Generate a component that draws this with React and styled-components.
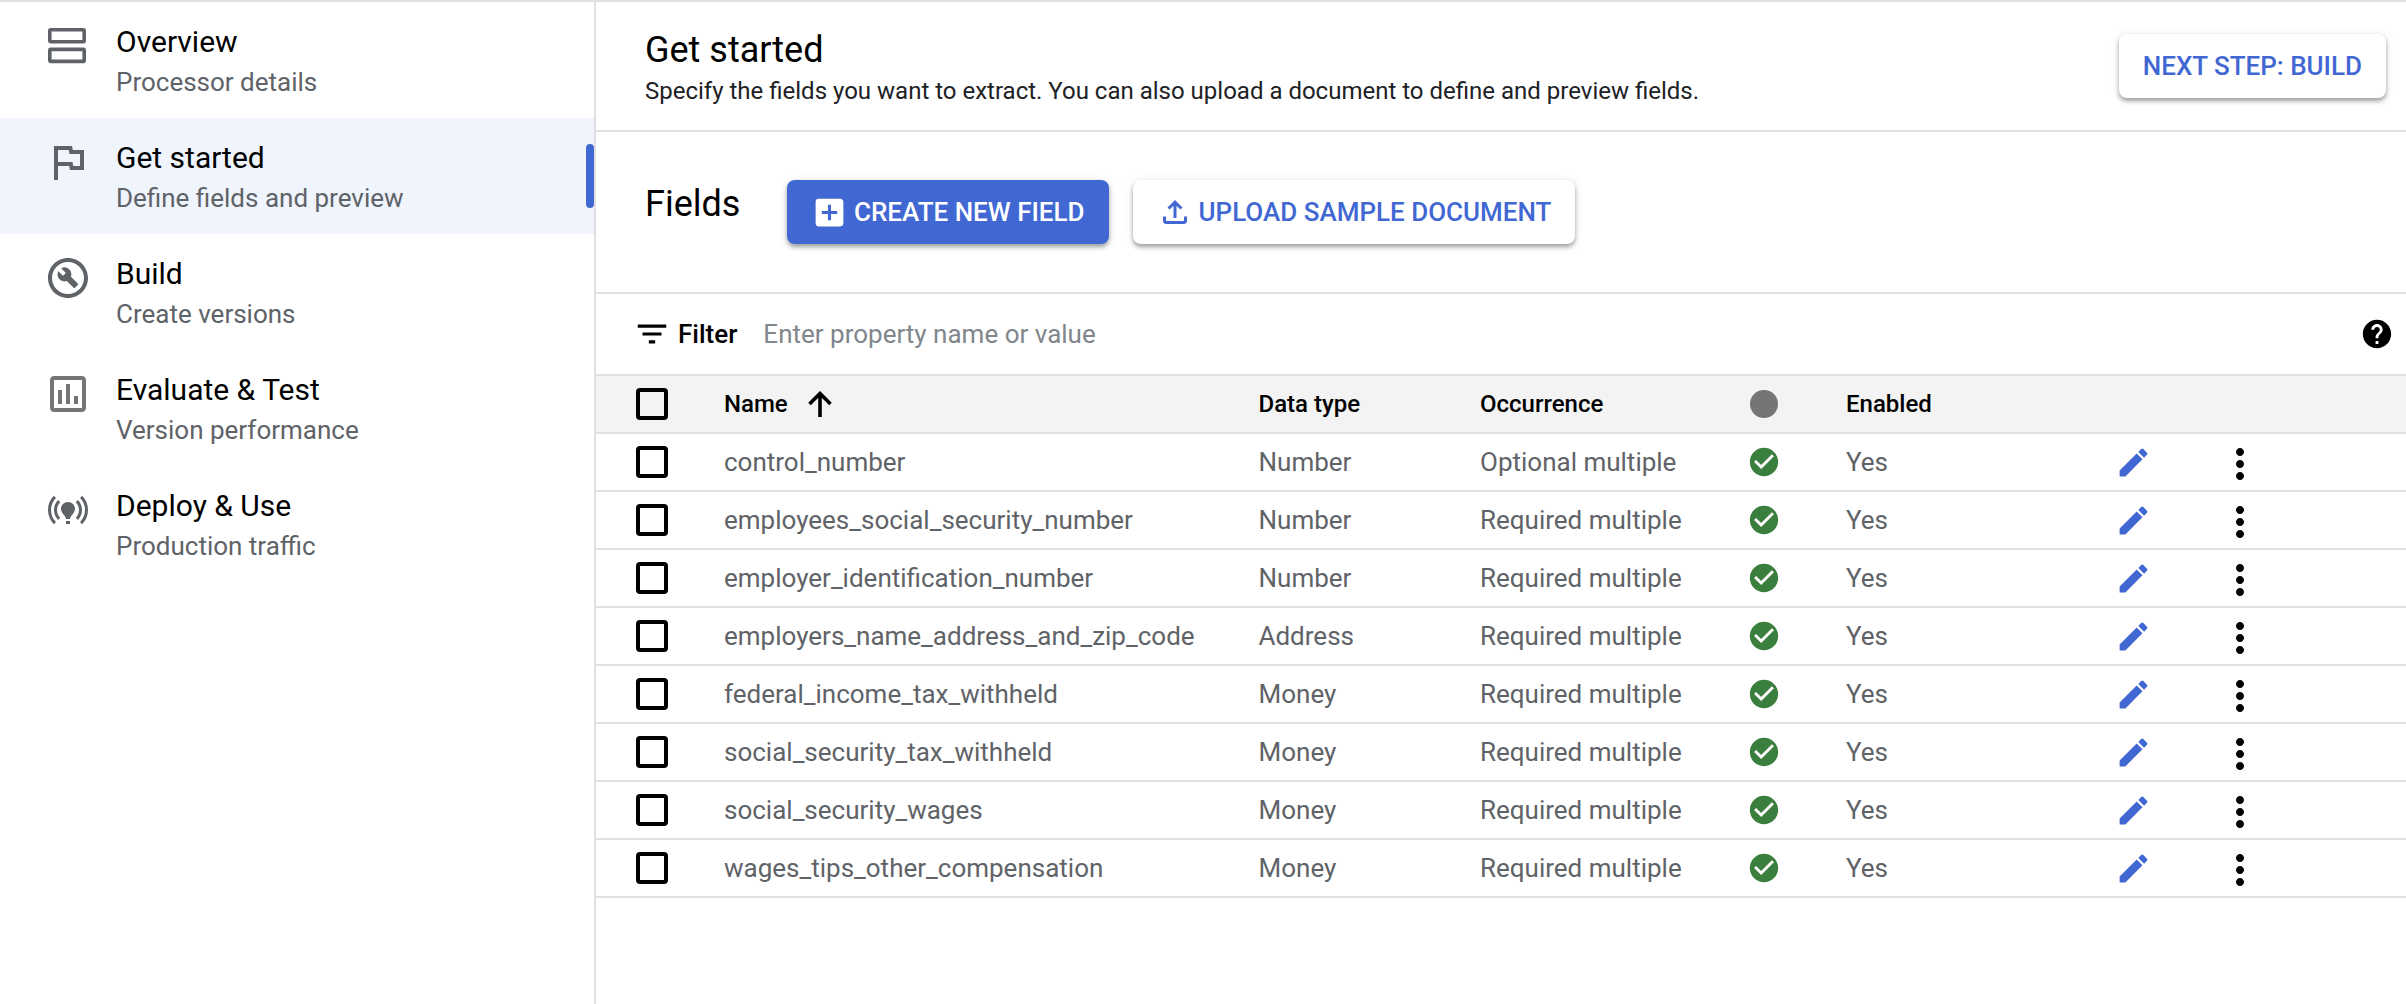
import React from "react";
import styled, { createGlobalStyle } from "styled-components";
import {
  MdOutlineFlag,
  MdOutlineBuildCircle,
  MdOutlineAssessment,
  MdOnlinePrediction,
  MdAddBox,
  MdOutlineFileUpload,
  MdFilterList,
  MdHelp,
  MdCheckCircle,
  MdEdit,
  MdMoreVert,
} from "react-icons/md";

const BLUE = "#4167d3";
const LINE = "#e0e0e0";

const AgendaIcon = ({ size }) => (
  <svg width={size} height={size} viewBox="0 0 48 48" fill="none" stroke="currentColor" strokeWidth="3.6">
    <rect x="5.8" y="7.8" width="34.4" height="12" rx="1" />
    <rect x="5.8" y="27.4" width="34.4" height="12" rx="1" />
  </svg>
);

const SortArrow = () => (
  <svg width="24" height="26" viewBox="0 0 24 26" fill="none" stroke="#000" strokeWidth="3.6">
    <path d="M12 26V3M1.5 13L12 2.5 22.5 13" />
  </svg>
);

const navItems = [
  { title: "Overview", sub: "Processor details", Icon: AgendaIcon },
  { title: "Get started", sub: "Define fields and preview", Icon: MdOutlineFlag, active: true },
  { title: "Build", sub: "Create versions", Icon: MdOutlineBuildCircle },
  { title: "Evaluate & Test", sub: "Version performance", Icon: MdOutlineAssessment, light: true },
  { title: "Deploy & Use", sub: "Production traffic", Icon: MdOnlinePrediction },
];

const fields = [
  ["control_number", "Number", "Optional multiple"],
  ["employees_social_security_number", "Number", "Required multiple"],
  ["employer_identification_number", "Number", "Required multiple"],
  ["employers_name_address_and_zip_code", "Address", "Required multiple"],
  ["federal_income_tax_withheld", "Money", "Required multiple"],
  ["social_security_tax_withheld", "Money", "Required multiple"],
  ["social_security_wages", "Money", "Required multiple"],
  ["wages_tips_other_compensation", "Money", "Required multiple"],
];

const App = () => {
  return (
    <Page>
      <GlobalStyle />
      <Sidebar>
        {navItems.map(({ title, sub, Icon, active, light }) => (
          <NavItem key={title} $active={active} $light={light}>
            <Icon size={48} />
            <NavText>
              <NavTitle>{title}</NavTitle>
              <NavSub>{sub}</NavSub>
            </NavText>
            {active && <ActiveBar />}
          </NavItem>
        ))}
      </Sidebar>
      <Main>
        <Header>
          <HeaderText>
            <PageTitle>Get started</PageTitle>
            <PageSub>
              Specify the fields you want to extract. You can also upload a document to define and
              preview fields.
            </PageSub>
          </HeaderText>
          <Button>NEXT STEP: BUILD</Button>
        </Header>
        <FieldsBar>
          <FieldsLabel>Fields</FieldsLabel>
          <Button $primary>
            <MdAddBox size={37} />
            CREATE NEW FIELD
          </Button>
          <Button>
            <MdOutlineFileUpload size={36} />
            UPLOAD SAMPLE DOCUMENT
          </Button>
        </FieldsBar>
        <FilterBar>
          <MdFilterList size={38} />
          <FilterLabel>Filter</FilterLabel>
          <FilterHint>Enter property name or value</FilterHint>
          <HelpIcon size={34} />
        </FilterBar>
        <HeadRow>
          <Checkbox />
          <NameHead>
            Name
            <SortArrow />
          </NameHead>
          <span>Data type</span>
          <span>Occurrence</span>
          <StatusDot />
          <span>Enabled</span>
        </HeadRow>
        {fields.map(([name, type, occurrence]) => (
          <Row key={name}>
            <Checkbox />
            <span>{name}</span>
            <span>{type}</span>
            <span>{occurrence}</span>
            <MdCheckCircle size={34} color="#3b7f3f" />
            <span>Yes</span>
            <MdEdit size={37} color={BLUE} />
            <DotsIcon size={48} />
          </Row>
        ))}
      </Main>
    </Page>
  );
};

export default App;

const GlobalStyle = createGlobalStyle`
  html, body {
    margin: 0;
    padding: 0;
    background: #fff;
  }
  * {
    box-sizing: border-box;
  }
`;

const Page = styled.div`
  width: 2406px;
  height: 1004px;
  overflow: hidden;
  display: flex;
  border-top: 2px solid ${LINE};
  font-family: Roboto, "Liberation Sans", sans-serif;
  color: #000;
`;

const Sidebar = styled.nav`
  width: 596px;
  flex-shrink: 0;
  border-right: 2px solid ${LINE};
`;

const NavItem = styled.div`
  position: relative;
  height: 116px;
  display: flex;
  align-items: flex-start;
  gap: 24px;
  padding: 20px 0 0 44px;
  background: ${(p) => (p.$active ? "#eff4fd" : "transparent")};
  color: ${(p) => (p.$light ? "#757575" : "#5f6368")};
`;

const NavText = styled.div`
  display: flex;
  flex-direction: column;
  margin-top: 1px;
`;

const NavTitle = styled.div`
  font-size: 30px;
  line-height: 38px;
  color: #000;
`;

const NavSub = styled.div`
  font-size: 26px;
  line-height: 40px;
  margin-top: 1px;
  color: #5f6368;
`;

const ActiveBar = styled.div`
  position: absolute;
  right: 0;
  top: 26px;
  width: 8px;
  height: 64px;
  border-radius: 4px;
  background: ${BLUE};
`;

const Main = styled.main`
  flex: 1;
  min-width: 0;
`;

const Header = styled.header`
  height: 130px;
  display: flex;
  align-items: flex-start;
  justify-content: space-between;
  padding: 32px 20px 0 49px;
  border-bottom: 2px solid ${LINE};
`;

const HeaderText = styled.div`
  margin-top: -8px;
`;

const PageTitle = styled.h1`
  margin: 0;
  font-size: 36px;
  font-weight: 400;
  line-height: 48px;
`;

const PageSub = styled.p`
  margin: 0;
  font-size: 24px;
  line-height: 34px;
  color: #202124;
`;

const Button = styled.button`
  height: 64px;
  display: inline-flex;
  align-items: center;
  gap: 6px;
  padding: 0 24px;
  border: 0;
  border-radius: 8px;
  font-family: inherit;
  font-size: 26px;
  font-weight: 500;
  white-space: nowrap;
  color: ${(p) => (p.$primary ? "#fff" : BLUE)};
  background: ${(p) => (p.$primary ? BLUE : "#fff")};
  box-shadow: 0 3px 4px rgba(60, 64, 67, 0.45), 0 1px 8px rgba(60, 64, 67, 0.12);
`;

const FieldsBar = styled.section`
  height: 162px;
  display: flex;
  align-items: flex-start;
  gap: 24px;
  padding: 48px 0 0 49px;
  border-bottom: 2px solid ${LINE};
`;

const FieldsLabel = styled.h2`
  width: 118px;
  margin: 0;
  font-size: 36px;
  font-weight: 400;
  line-height: 48px;
`;

const FilterBar = styled.div`
  height: 80px;
  display: flex;
  align-items: center;
  padding: 0 12px 0 37px;
`;

const FilterLabel = styled.span`
  margin-left: 7px;
  font-size: 26px;
  font-weight: 500;
`;

const FilterHint = styled.span`
  margin-left: 26px;
  font-size: 26px;
  color: #80868b;
`;

const HelpIcon = styled(MdHelp)`
  margin-left: auto;
`;

const Row = styled.div`
  height: 58px;
  display: grid;
  grid-template-columns: 88px 534.5px 221.5px 267px 99px 269px 101px 48px;
  align-items: center;
  padding-left: 40px;
  border-bottom: 2px solid ${LINE};
  font-size: 26px;
  color: #5f6368;
  white-space: nowrap;
`;

const HeadRow = styled(Row)`
  height: 60px;
  border-top: 2px solid ${LINE};
  background: #f3f3f3;
  font-size: 24px;
  font-weight: 500;
  color: #000;
`;

const NameHead = styled.span`
  display: flex;
  align-items: center;
  gap: 20px;
`;

const Checkbox = styled.span`
  display: block;
  width: 32px;
  height: 32px;
  border: 4px solid #000;
  border-radius: 4px;
`;

const StatusDot = styled.span`
  display: block;
  width: 28px;
  height: 28px;
  margin-left: 3px;
  border-radius: 50%;
  background: #757575;
`;

const DotsIcon = styled(MdMoreVert)`
  color: #000;
  margin-top: 4px;
`;
